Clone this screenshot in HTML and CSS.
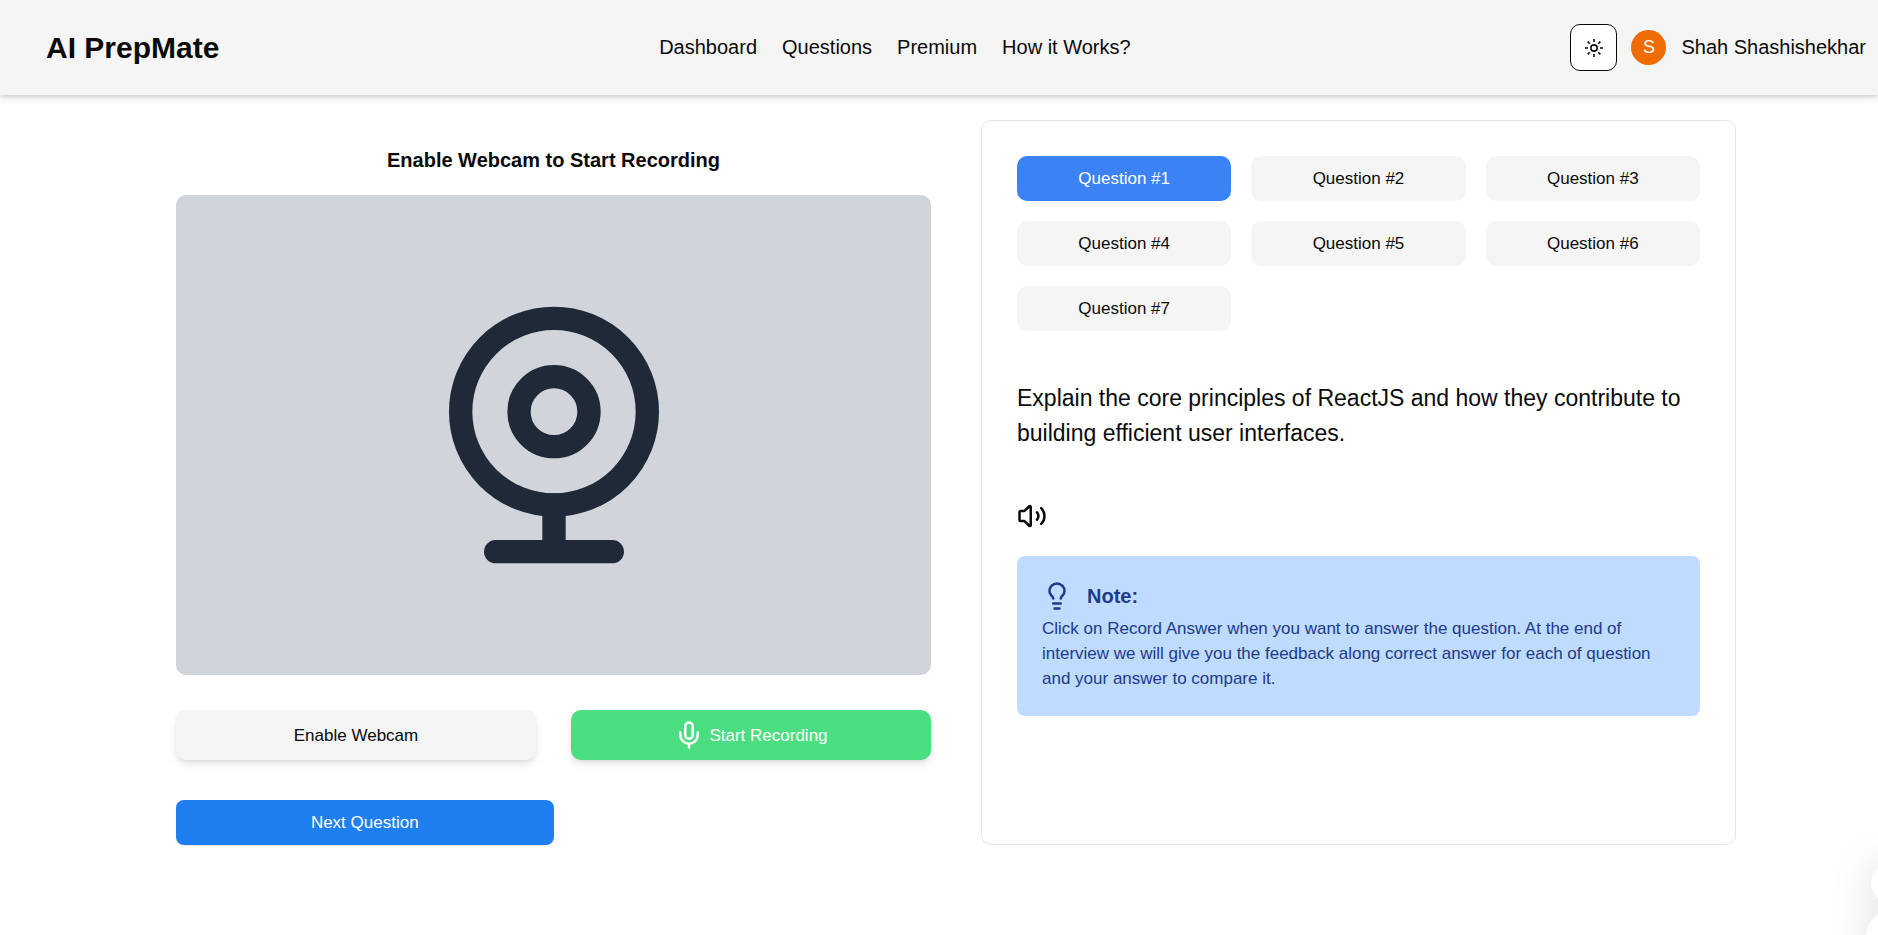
FILE: index.html
```html
<!DOCTYPE html>
<html lang="en">
<head>
<meta charset="utf-8">
<meta name="viewport" content="width=device-width, initial-scale=1">
<title>AI PrepMate</title>
<link rel="stylesheet" href="styles.css">
</head>
<body>
<header class="header">
  <h2 class="brand">AI PrepMate</h2>
  <nav class="nav">
    <a href="#">Dashboard</a>
    <a href="#">Questions</a>
    <a href="#">Premium</a>
    <a href="#">How it Works?</a>
  </nav>
  <div class="account">
    <button class="theme-toggle" type="button" aria-label="Toggle theme">
      <svg class="icon-sun" viewBox="0 0 15 15" fill="none" stroke="currentColor" stroke-width="1.3"><circle cx="7.5" cy="7.5" r="2.6"/><path d="M7.500 0v2.500M7.500 12.500v2.500M0 7.500h2.500M12.500 7.500h2.500M2.200 2.200l1.770 1.770M11.030 11.030l1.770 1.770M2.200 12.800l1.770-1.770M11.030 3.970l1.770-1.770"/></svg>
    </button>
    <button class="avatar" type="button" aria-label="Open user menu">S</button>
    <span class="username">Shah Shashishekhar</span>
  </div>
</header>

<main class="interview">
  <section class="recorder">
    <h2 class="recorder-title">Enable Webcam to Start Recording</h2>
    <div class="webcam">
      <svg class="icon-webcam" viewBox="0 0 24 24" fill="none" stroke="currentColor" stroke-width="2" stroke-linecap="round" stroke-linejoin="round"><circle cx="12" cy="10" r="8"/><circle cx="12" cy="10" r="3"/><path d="M7 22h10M12 22v-4"/></svg>
    </div>
    <div class="controls">
      <button class="btn btn-muted" type="button">Enable Webcam</button>
      <button class="btn btn-record" type="button">
        <svg class="icon" viewBox="0 0 24 24" fill="none" stroke="currentColor" stroke-width="2" stroke-linecap="round" stroke-linejoin="round"><path d="M12 2a3 3 0 0 0-3 3v7a3 3 0 0 0 6 0V5a3 3 0 0 0-3-3Z"/><path d="M19 10v2a7 7 0 0 1-14 0v-2M12 19v3"/></svg>
        Start Recording
      </button>
    </div>
    <button class="btn-next" type="button">Next Question</button>
  </section>

  <section class="panel">
    <div class="tabs">
      <button class="tab tab-active" type="button">Question #1</button>
      <button class="tab" type="button">Question #2</button>
      <button class="tab" type="button">Question #3</button>
      <button class="tab" type="button">Question #4</button>
      <button class="tab" type="button">Question #5</button>
      <button class="tab" type="button">Question #6</button>
      <button class="tab" type="button">Question #7</button>
    </div>
    <p class="question">Explain the core principles of ReactJS and how they contribute to building efficient user interfaces.</p>
    <button class="speak" type="button" aria-label="Read question aloud">
      <svg class="icon" viewBox="0 0 24 24" fill="none" stroke="currentColor" stroke-width="2" stroke-linecap="round" stroke-linejoin="round"><path d="M11 4.702a.705.705 0 0 0-1.203-.498L6.413 7.587A1.400 1.400 0 0 1 5.416 8H3a1 1 0 0 0-1 1v6a1 1 0 0 0 1 1h2.416a1.400 1.400 0 0 1 .997.413l3.383 3.384A.705.705 0 0 0 11 19.298z"/><path d="M16 9a5 5 0 0 1 0 6M19.364 18.364a9 9 0 0 0 0-12.728"/></svg>
    </button>
    <div class="note">
      <h3 class="note-title">
        <svg class="icon" viewBox="0 0 24 24" fill="none" stroke="currentColor" stroke-width="2" stroke-linecap="round" stroke-linejoin="round"><path d="M15 14c.2-1 .7-1.700 1.500-2.500 1-.9 1.500-2.200 1.500-3.500A6 6 0 0 0 6 8c0 1 .2 2.200 1.500 3.500.7.7 1.300 1.500 1.500 2.500M9 18h6M10 22h4"/></svg>
        Note:
      </h3>
      <p class="note-text">Click on Record Answer when you want to answer the question. At the end of interview we will give you the feedback along correct answer for each of question and your answer to compare it.</p>
    </div>
  </section>
</main>

<aside class="launcher" aria-hidden="true">
  <span class="bubble bubble-small"></span>
  <span class="bubble"></span>
</aside>
</body>
</html>
```

FILE: styles.css
```css
* {
  box-sizing: border-box;
  margin: 0;
}

body {
  min-height: 100vh;
  background: #ffffff;
  color: #0a0a0a;
  font-family: "Liberation Sans", Arial, sans-serif;
  font-size: 17px;
  line-height: 25px;
}

button {
  border: 0;
  padding: 0;
  color: inherit;
  font: inherit;
  cursor: pointer;
}

.header {
  display: flex;
  align-items: center;
  justify-content: space-between;
  padding: 24px 12px 24px 46px;
  background: #f5f5f5;
  font-size: 20px;
  box-shadow: 0 1px 4px rgba(0, 0, 0, 0.16), 0 4px 8px rgba(0, 0, 0, 0.08);
}

.brand {
  font-size: 30px;
  line-height: 40px;
}

.nav {
  display: flex;
  gap: 25px;
}

.nav a {
  color: inherit;
  text-decoration: none;
}

.account {
  display: flex;
  align-items: center;
}

.theme-toggle {
  display: grid;
  place-items: center;
  width: 47px;
  height: 47px;
  margin-right: 14px;
  border: 1px solid #0a0a0a;
  border-radius: 10px;
  background: #ffffff;
}

.icon-sun {
  width: 18px;
  height: 18px;
}

.avatar {
  width: 35px;
  height: 35px;
  margin-right: 15px;
  border-radius: 50%;
  background: #ef6c00;
  color: #ffffff;
  font-size: 18px;
}

.interview {
  display: grid;
  grid-template-columns: 1fr 1fr;
  gap: 50px;
  padding: 25px 142px 25px 176px;
}

.recorder {
  display: flex;
  flex-direction: column;
  padding-top: 25px;
}

.recorder-title {
  margin-bottom: 20px;
  font-size: 20px;
  line-height: 30px;
  text-align: center;
}

.webcam {
  display: grid;
  place-items: center;
  padding: 100px 0;
  border-radius: 10px;
  background: #d1d5db;
  color: #1f2937;
}

.icon-webcam {
  width: 280px;
  height: 280px;
}

.icon {
  flex: none;
  width: 30px;
  height: 30px;
}

.controls {
  display: grid;
  grid-template-columns: 1fr 1fr;
  gap: 35px;
  margin: 35px 0 40px;
}

.btn {
  display: flex;
  align-items: center;
  justify-content: center;
  gap: 5px;
  padding: 10px;
  border-radius: 10px;
  box-shadow: 0 5px 8px -1px rgba(0, 0, 0, 0.1), 0 2px 5px -2px rgba(0, 0, 0, 0.1);
}

.btn-muted {
  background: #f5f5f5;
}

.btn-record {
  background: #4ade80;
  color: #ffffff;
}

.btn-next {
  width: 50%;
  padding: 10px;
  border-radius: 8px;
  background: #1e80f0;
  color: #ffffff;
  box-shadow: 0 1px 2px rgba(0, 0, 0, 0.1);
}

.panel {
  padding: 35px;
  border: 1px solid #e5e5e5;
  border-radius: 10px;
}

.tabs {
  display: grid;
  grid-template-columns: repeat(3, 1fr);
  gap: 20px;
}

.tab {
  padding: 10px;
  border-radius: 10px;
  background: #f5f5f5;
}

.tab-active {
  background: #3b82f6;
  color: #ffffff;
}

.question {
  margin: 50px 0;
  font-size: 23px;
  line-height: 35px;
}

.speak {
  display: block;
  margin-bottom: 25px;
  background: none;
}

.speak .icon {
  display: block;
}

.note {
  padding: 25px;
  border-radius: 8px;
  background: #bfdbfe;
  color: #1e3a8a;
}

.note-title {
  display: flex;
  align-items: center;
  gap: 15px;
  margin-bottom: 5px;
  font-size: 20px;
  line-height: 30px;
}

/* Support launcher, tucked into the bottom right corner */
.launcher {
  position: fixed;
  right: -38px;
  bottom: -26px;
  display: flex;
  flex-direction: column;
  align-items: center;
  gap: 8px;
  filter: drop-shadow(0 0 20px rgba(0, 0, 0, 0.14));
}

.bubble {
  width: 50px;
  height: 50px;
  border-radius: 50%;
  background: #ffffff;
}

.bubble-small {
  width: 40px;
  height: 40px;
}
```
